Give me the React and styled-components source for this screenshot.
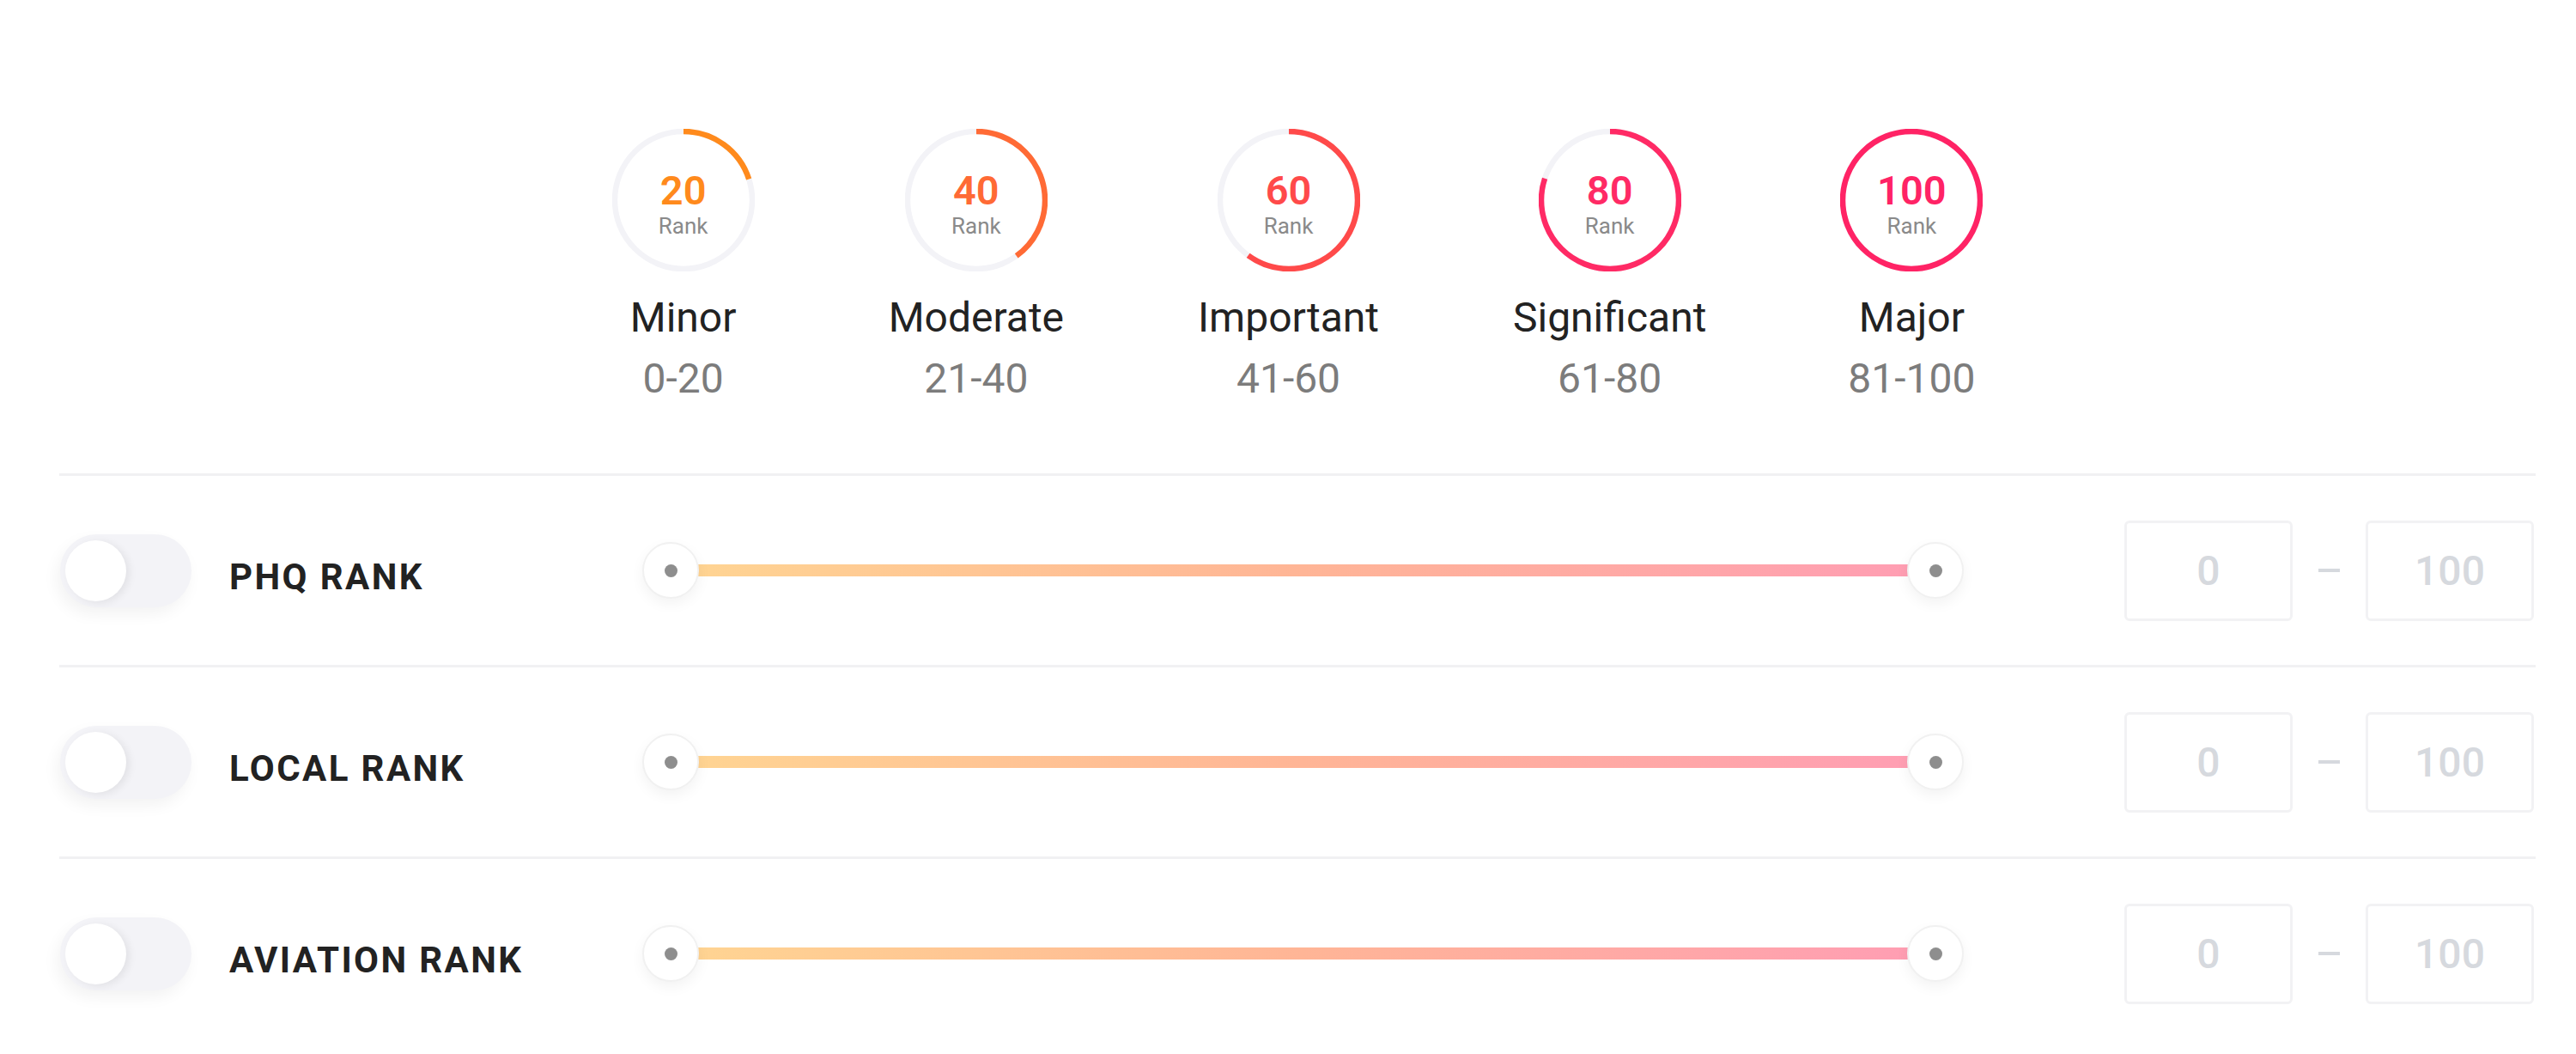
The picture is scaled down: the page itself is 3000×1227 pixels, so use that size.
import React from "react";
import styled, { createGlobalStyle } from "styled-components";

const Global = createGlobalStyle`
  html, body { margin: 0; padding: 0; background: #ffffff; }
  body { font-family: Roboto, "Liberation Sans", Arial, sans-serif; }
  * { box-sizing: border-box; }
`;

const Page = styled.div`
  width: 2884px;
  margin-left: 69px;
  padding-top: 150px;
`;

const Legend = styled.div`
  display: flex;
  justify-content: center;
  gap: 156px;
`;

const LegendItem = styled.div`
  display: flex;
  flex-direction: column;
  align-items: center;
`;

const Gauge = styled.div`
  display: grid;
  width: 166px;
  height: 166px;
  & > * { grid-area: 1 / 1; }
`;

const GaugeText = styled.div`
  display: flex;
  flex-direction: column;
  align-items: center;
  justify-content: center;
  padding-top: 8px;
`;

const GaugeValue = styled.div`
  font-size: 47px;
  line-height: 46px;
  font-weight: 600;
  color: ${(p) => p.$color};
`;

const GaugeUnit = styled.div`
  font-size: 26px;
  line-height: 26px;
  margin-top: 5px;
  color: #8a8a8a;
`;

const LegendName = styled.div`
  font-size: 48px;
  line-height: 58px;
  margin-top: 25px;
  color: #222222;
`;

const LegendRange = styled.div`
  font-size: 48px;
  line-height: 58px;
  margin-top: 13px;
  color: #7c7c7c;
`;

const Rows = styled.div`
  margin-top: 81px;
`;

const Row = styled.div`
  display: flex;
  align-items: center;
  height: 223px;
  border-top: 3px solid #f1f1f3;
  padding-left: 1px;
`;

const Toggle = styled.div`
  flex: none;
  width: 153px;
  height: 85px;
  border-radius: 43px;
  background: #f3f3f7;
  padding: 7px 6px;
  display: flex;
  align-items: center;
  box-shadow: -4px 8px 18px rgba(0, 0, 0, 0.05);
`;

const ToggleKnob = styled.div`
  width: 71px;
  height: 71px;
  border-radius: 50%;
  background: #ffffff;
  box-shadow: 4px 2px 10px rgba(0, 0, 0, 0.07);
`;

const Label = styled.div`
  flex: none;
  width: 481px;
  margin-left: 44px;
  padding-top: 14px;
  font-size: 42px;
  font-weight: 700;
  letter-spacing: 2.4px;
  color: #222222;
`;

const Slider = styled.div`
  flex: 1;
  height: 66px;
  display: flex;
  align-items: center;
  justify-content: space-between;
  position: relative;
`;

const Track = styled.div`
  position: absolute;
  left: 33px;
  right: 33px;
  top: 26px;
  height: 14px;
  background: linear-gradient(90deg, #ffd592, #ffb596 50%, #ff9db4);
`;

const Handle = styled.div`
  position: relative;
  width: 66px;
  height: 66px;
  border-radius: 50%;
  background: #ffffff;
  border: 2px solid #f1f1f1;
  box-shadow: 0 6px 16px rgba(0, 0, 0, 0.05);
  display: flex;
  align-items: center;
  justify-content: center;
  &::after {
    content: "";
    width: 15px;
    height: 15px;
    border-radius: 50%;
    background: #8e8e8e;
  }
`;

const Inputs = styled.div`
  flex: none;
  margin-left: 187px;
  margin-right: 2px;
  display: flex;
  align-items: center;
  gap: 30px;
`;

const NumBox = styled.div`
  width: 196px;
  height: 117px;
  border: 3px solid #f2f2f4;
  border-radius: 6px;
  display: flex;
  align-items: center;
  justify-content: center;
  font-size: 48px;
  font-weight: 500;
  color: #d6d9de;
`;

const Dash = styled.div`
  width: 25px;
  height: 4px;
  background: #d6d9de;
`;

const levels = [
  { v: 20, name: "Minor", range: "0-20", color: "#ff8a1c" },
  { v: 40, name: "Moderate", range: "21-40", color: "#ff6a35" },
  { v: 60, name: "Important", range: "41-60", color: "#ff4a4a" },
  { v: 80, name: "Significant", range: "61-80", color: "#ff2a65" },
  { v: 100, name: "Major", range: "81-100", color: "#ff2365" },
];

const R = 80;
const C = 2 * Math.PI * R;

function Ring({ v, color }) {
  return (
    <svg width="166" height="166" viewBox="0 0 166 166">
      <circle cx="83" cy="83" r={R} fill="none" stroke="#f3f3f7" strokeWidth="6.5" />
      <circle
        cx="83"
        cy="83"
        r={R}
        fill="none"
        stroke={color}
        strokeWidth="6.5"
        strokeDasharray={`${(C * v) / 100} ${C}`}
        transform="rotate(-90 83 83)"
      />
    </svg>
  );
}

const rows = ["PHQ RANK", "LOCAL RANK", "AVIATION RANK"];

export default function App() {
  return (
    <>
      <Global />
      <Page>
        <Legend>
          {levels.map((l) => (
            <LegendItem key={l.v}>
              <Gauge>
                <Ring v={l.v} color={l.color} />
                <GaugeText>
                  <GaugeValue $color={l.color}>{l.v}</GaugeValue>
                  <GaugeUnit>Rank</GaugeUnit>
                </GaugeText>
              </Gauge>
              <LegendName>{l.name}</LegendName>
              <LegendRange>{l.range}</LegendRange>
            </LegendItem>
          ))}
        </Legend>
        <Rows>
          {rows.map((r) => (
            <Row key={r}>
              <Toggle>
                <ToggleKnob />
              </Toggle>
              <Label>{r}</Label>
              <Slider>
                <Track />
                <Handle />
                <Handle />
              </Slider>
              <Inputs>
                <NumBox>0</NumBox>
                <Dash />
                <NumBox>100</NumBox>
              </Inputs>
            </Row>
          ))}
        </Rows>
      </Page>
    </>
  );
}
